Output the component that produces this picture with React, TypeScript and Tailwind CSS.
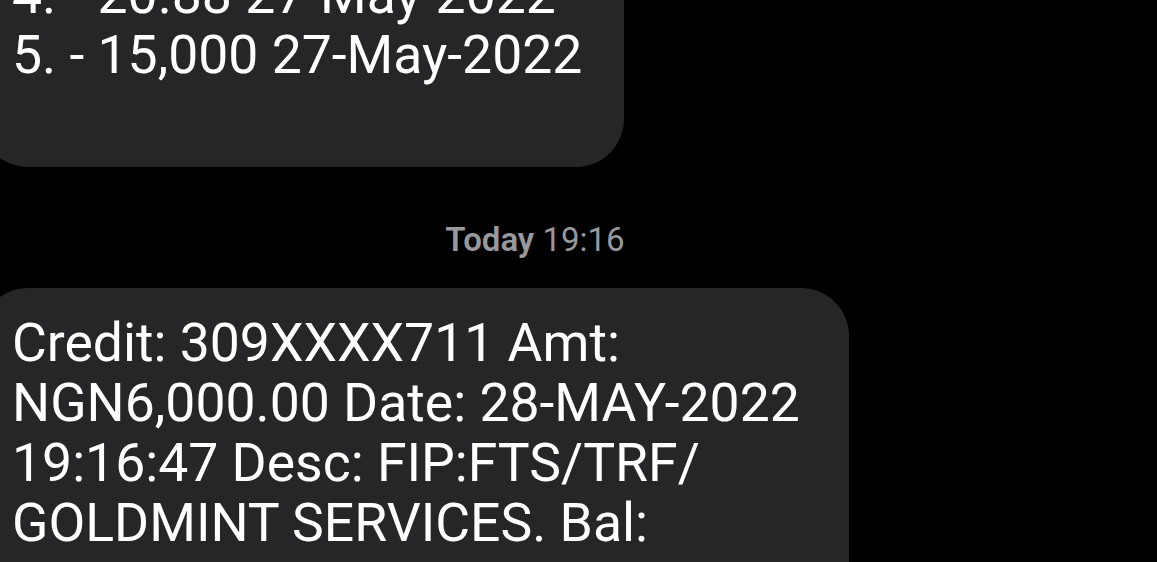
export default function App() {
  return (
    <div className="h-[562px] w-[1157px] overflow-hidden bg-black font-['Roboto',sans-serif] text-white">
      {/* Earlier message, cut off at the top */}
      <div className="-ml-[20px] -mt-[60px] w-[644px] rounded-[48px] bg-[#262628] pb-[22px] pl-[32px] pt-[25px] text-[53.5px] leading-[60px] whitespace-nowrap">
        <div>4. - 20.88 27-May-2022</div>
        <div>5. - 15,000 27-May-2022</div>
        <div>&nbsp;</div>
      </div>

      {/* Timestamp */}
      <div className="mt-[55px] mb-[30px] w-[1070px] text-center text-[33px] leading-[36px] text-[#98989d]">
        <span className="font-semibold">Today</span> 19:16
      </div>

      {/* Latest message */}
      <div className="-ml-[20px] h-[320px] w-[869px] rounded-t-[48px] bg-[#262628] pl-[32px] pt-[25px] text-[53.5px] leading-[60px] whitespace-nowrap">
        <div>Credit: 309XXXX711 Amt:</div>
        <div>NGN6,000.00 Date: 28-MAY-2022</div>
        <div>19:16:47 Desc: FIP:FTS/TRF/</div>
        <div>GOLDMINT SERVICES. Bal:</div>
      </div>
    </div>
  )
}
